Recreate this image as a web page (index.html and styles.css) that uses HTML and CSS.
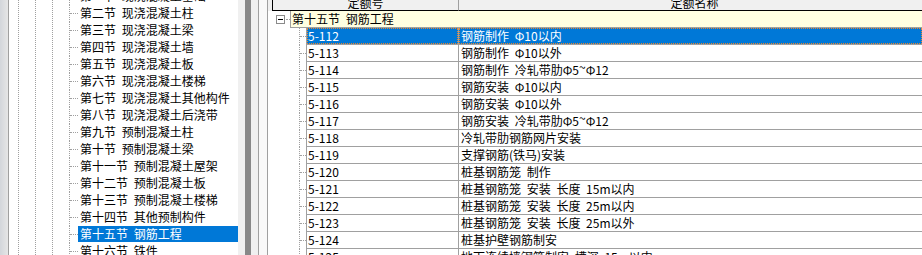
FILE: index.html
```html
<!DOCTYPE html>
<html lang="zh-CN">
<head>
<meta charset="utf-8">
<title>定额</title>
<link rel="stylesheet" href="styles.css">
</head>
<body>
<div class="app">
  <div class="edge"></div>
  <div class="tree">
    <div class="guide"></div><div class="guide"></div><div class="guide"></div>
    <ul class="items">
      <li class="item"><span class="branch"></span><span class="label">第一节 现浇混凝土基础</span></li>
      <li class="item"><span class="branch"></span><span class="label">第二节 现浇混凝土柱</span></li>
      <li class="item"><span class="branch"></span><span class="label">第三节 现浇混凝土梁</span></li>
      <li class="item"><span class="branch"></span><span class="label">第四节 现浇混凝土墙</span></li>
      <li class="item"><span class="branch"></span><span class="label">第五节 现浇混凝土板</span></li>
      <li class="item"><span class="branch"></span><span class="label">第六节 现浇混凝土楼梯</span></li>
      <li class="item"><span class="branch"></span><span class="label">第七节 现浇混凝土其他构件</span></li>
      <li class="item"><span class="branch"></span><span class="label">第八节 现浇混凝土后浇带</span></li>
      <li class="item"><span class="branch"></span><span class="label">第九节 预制混凝土柱</span></li>
      <li class="item"><span class="branch"></span><span class="label">第十节 预制混凝土梁</span></li>
      <li class="item"><span class="branch"></span><span class="label">第十一节 预制混凝土屋架</span></li>
      <li class="item"><span class="branch"></span><span class="label">第十二节 预制混凝土板</span></li>
      <li class="item"><span class="branch"></span><span class="label">第十三节 预制混凝土楼梯</span></li>
      <li class="item"><span class="branch"></span><span class="label">第十四节 其他预制构件</span></li>
      <li class="item selected"><span class="branch"></span><span class="label">第十五节 钢筋工程</span></li>
      <li class="item"><span class="branch"></span><span class="label">第十六节 铁件</span></li>
    </ul>
  </div>
  <div class="sash-a"></div><div class="sash-b"></div><div class="sash-c"></div><div class="frame"></div>
  <div class="grid">
    <div class="header"><div class="hc hc1">定额号</div><div class="hc hc2">定额名称</div></div>
    <div class="group">
      <div class="gtree"><span class="minus"></span><span class="gdots"></span></div>
      <div class="gcell">第十五节 钢筋工程</div>
    </div>
    <div class="row sel"><div class="rtree"><span class="conn"><span class="tick"></span></span></div><div class="cells"><div class="c1">5-112</div><div class="sep"></div><div class="c2">钢筋制作 Φ10以内</div></div></div>
    <div class="row"><div class="rtree"><span class="conn"><span class="tick"></span></span></div><div class="cells"><div class="c1">5-113</div><div class="sep"></div><div class="c2">钢筋制作 Φ10以外</div></div></div>
    <div class="row"><div class="rtree"><span class="conn"><span class="tick"></span></span></div><div class="cells"><div class="c1">5-114</div><div class="sep"></div><div class="c2">钢筋制作 冷轧带肋Φ5<span class="tilde">~</span>Φ12</div></div></div>
    <div class="row"><div class="rtree"><span class="conn"><span class="tick"></span></span></div><div class="cells"><div class="c1">5-115</div><div class="sep"></div><div class="c2">钢筋安装 Φ10以内</div></div></div>
    <div class="row"><div class="rtree"><span class="conn"><span class="tick"></span></span></div><div class="cells"><div class="c1">5-116</div><div class="sep"></div><div class="c2">钢筋安装 Φ10以外</div></div></div>
    <div class="row"><div class="rtree"><span class="conn"><span class="tick"></span></span></div><div class="cells"><div class="c1">5-117</div><div class="sep"></div><div class="c2">钢筋安装 冷轧带肋Φ5<span class="tilde">~</span>Φ12</div></div></div>
    <div class="row"><div class="rtree"><span class="conn"><span class="tick"></span></span></div><div class="cells"><div class="c1">5-118</div><div class="sep"></div><div class="c2">冷轧带肋钢筋网片安装</div></div></div>
    <div class="row"><div class="rtree"><span class="conn"><span class="tick"></span></span></div><div class="cells"><div class="c1">5-119</div><div class="sep"></div><div class="c2">支撑钢筋(铁马)安装</div></div></div>
    <div class="row"><div class="rtree"><span class="conn"><span class="tick"></span></span></div><div class="cells"><div class="c1">5-120</div><div class="sep"></div><div class="c2">桩基钢筋笼 制作</div></div></div>
    <div class="row"><div class="rtree"><span class="conn"><span class="tick"></span></span></div><div class="cells"><div class="c1">5-121</div><div class="sep"></div><div class="c2">桩基钢筋笼 安装 长度 15m以内</div></div></div>
    <div class="row"><div class="rtree"><span class="conn"><span class="tick"></span></span></div><div class="cells"><div class="c1">5-122</div><div class="sep"></div><div class="c2">桩基钢筋笼 安装 长度 25m以内</div></div></div>
    <div class="row"><div class="rtree"><span class="conn"><span class="tick"></span></span></div><div class="cells"><div class="c1">5-123</div><div class="sep"></div><div class="c2">桩基钢筋笼 安装 长度 25m以外</div></div></div>
    <div class="row"><div class="rtree"><span class="conn"><span class="tick"></span></span></div><div class="cells"><div class="c1">5-124</div><div class="sep"></div><div class="c2">桩基护壁钢筋制安</div></div></div>
    <div class="row"><div class="rtree"><span class="conn"><span class="tick"></span></span></div><div class="cells"><div class="c1">5-125</div><div class="sep"></div><div class="c2">地下连续墙钢筋制安 槽深 15m以内</div></div></div>
  </div>
</div>
</body>
</html>
```

FILE: styles.css
```css
html, body {
  margin: 0;
  padding: 0;
  width: 922px;
  height: 255px;
  overflow: hidden;
  background: #fff;
}
body {
  font-family: "Noto Sans CJK SC", sans-serif;
  font-size: 12px;
  color: #000;
}
.app {
  display: flex;
  height: 255px;
  overflow: hidden;
}
.edge {
  width: 8px;
  flex: none;
  background: linear-gradient(to right, #d3d6db, #e6e6e6);
  border-right: 1px solid #a0a0a0;
}
.tree {
  width: 229px;
  flex: none;
  display: flex;
  padding-left: 9px;
  box-sizing: border-box;
  background: #fff;
  overflow: hidden;
}
.guide {
  width: 17px;
  flex: none;
  box-sizing: border-box;
  border-left: 1px dotted #a0a0a0;
}
.items {
  flex: 1;
  min-width: 0;
  list-style: none;
  margin: -12px 0 0 0;
  padding: 0;
}
.item {
  display: flex;
  height: 17px;
  box-sizing: border-box;
  border-left: 1px dotted #a0a0a0;
}
.branch {
  width: 8px;
  flex: none;
  height: 0;
  margin-top: 8px;
  border-top: 1px dotted #a0a0a0;
}
.label {
  flex: 1;
  height: 16px;
  line-height: 16px;
  padding-left: 2px;
  white-space: nowrap;
  word-spacing: 3px;
}
.item.selected .label {
  background: #0078d7;
  color: #fff;
}
.sash-a { width: 7px; flex: none; background: #f0f0f0; }
.sash-b { width: 6px; flex: none; background: #888888; }
.sash-c { width: 7px; flex: none; background: #f0f0f0; }
.frame {
  width: 10px;
  flex: none;
  box-sizing: border-box;
  background: #f9f9f9;
  border-left: 1px solid #a0a0a0;
  border-right: 1px solid #a0a0a0;
}
.grid {
  flex: 1;
  min-width: 0;
  display: flex;
  flex-direction: column;
  overflow: hidden;
  background: #fff;
}
.header {
  display: flex;
  flex: none;
  margin-top: -5px;
  padding-left: 4px;
  height: 16px;
  background: #f0f0f0;
}
.hc {
  flex: none;
  height: 15px;
  line-height: 15px;
  border-bottom: 1px solid #000;
  text-align: center;
  white-space: nowrap;
  background: #f0f0f0;
}
.hc1 {
  width: 185px;
  border-left: 1px solid #000;
  border-right: 1px solid #a0a0a0;
}
.hc2 {
  width: 471px;
}
.group {
  display: flex;
  flex: none;
  height: 17px;
}
.gtree {
  width: 22px;
  flex: none;
  display: flex;
  align-items: flex-start;
  padding: 4px 0 0 8px;
  box-sizing: border-box;
}
.minus {
  width: 9px;
  height: 9px;
  flex: none;
  box-sizing: border-box;
  border: 1px solid #8a8a8a;
  background: linear-gradient(#000, #000) center / 5px 1px no-repeat, #fff;
}
.gdots {
  width: 4px;
  height: 0;
  margin: 4px 0 0 1px;
  border-top: 1px dotted #a0a0a0;
}
.gcell {
  flex: 1;
  min-width: 0;
  height: 16px;
  line-height: 16px;
  padding-left: 1px;
  background: #ffffe1;
  border-left: 1px solid #a0a0a0;
  border-bottom: 1px solid #a0a0a0;
  white-space: nowrap;
  word-spacing: 3px;
}
.row {
  display: flex;
  flex: none;
  height: 17px;
}
.rtree {
  width: 38px;
  flex: none;
  display: flex;
  padding-left: 31px;
  box-sizing: border-box;
}
.conn {
  width: 7px;
  flex: none;
  box-sizing: border-box;
  border-left: 1px dotted #a0a0a0;
}
.tick {
  display: block;
  width: 6px;
  height: 0;
  margin-top: 8px;
  border-top: 1px dotted #a0a0a0;
}
.cells {
  flex: 1;
  min-width: 0;
  display: flex;
  height: 17px;
  box-sizing: border-box;
  border-left: 1px solid #a0a0a0;
  border-bottom: 1px solid #a0a0a0;
}
.c1 {
  width: 151px;
  flex: none;
  box-sizing: border-box;
  height: 16px;
  line-height: 16px;
  padding-left: 1px;
  white-space: nowrap;
}
.sep {
  width: 1px;
  flex: none;
  background: #a0a0a0;
}
.c2 {
  flex: 1;
  min-width: 0;
  height: 16px;
  line-height: 16px;
  padding-left: 2px;
  white-space: nowrap;
  word-spacing: 3px;
}
.tilde {
  display: inline-block;
  transform: translateY(-3px);
}
.row.sel .c1,
.row.sel .c2 {
  background: #0078d7;
  color: #fff;
  outline: 1px dotted #e8862e;
  outline-offset: -1px;
}
```
